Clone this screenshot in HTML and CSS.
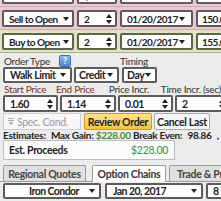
FILE: index.html
```html
<!DOCTYPE html>
<html>
<head>
<meta charset="utf-8">
<link rel="stylesheet" href="styles.css">
</head>
<body>
<div class="page">
  <div class="legs">
    <div class="leg sell">
      <div class="box action"><span class="caret"></span></div>
      <div class="box qty"><svg class="spin" width="6" height="10" viewBox="0 0 6 10"><path d="M0 4 L3 0 L6 4Z M0 6 L3 10 L6 6Z" fill="#222"/></svg></div>
      <div class="box date"><span class="caret"></span></div>
      <div class="box strike"></div>
    </div>
    <div class="leg sell">
      <div class="box action"><span class="txt">Sell to Open</span><span class="caret"></span></div>
      <div class="box qty"><span class="txt">2</span><svg class="spin" width="6" height="10" viewBox="0 0 6 10"><path d="M0 4 L3 0 L6 4Z M0 6 L3 10 L6 6Z" fill="#222"/></svg></div>
      <div class="box date"><span class="txt">01/20/2017</span><span class="caret"></span></div>
      <div class="box strike"><span class="txt">150.0</span></div>
    </div>
    <div class="leg buy">
      <div class="box action"><span class="txt">Buy to Open</span><span class="caret"></span></div>
      <div class="box qty"><span class="txt">2</span><svg class="spin" width="6" height="10" viewBox="0 0 6 10"><path d="M0 4 L3 0 L6 4Z M0 6 L3 10 L6 6Z" fill="#222"/></svg></div>
      <div class="box date"><span class="txt">01/20/2017</span><span class="caret"></span></div>
      <div class="box strike"><span class="txt">155.0</span></div>
    </div>
  </div>

  <div class="order">
    <div class="lbl-row top">
      <div class="lbl w-ordertype">Order Type <span class="help">?</span></div>
      <div class="lbl">Timing</div>
    </div>
    <div class="sel-row">
      <div class="sel walk"><span class="txt">Walk Limit</span><span class="caret"></span></div>
      <div class="sel credit"><span class="txt">Credit</span><span class="caret"></span></div>
      <div class="sel day"><span class="txt">Day</span><span class="caret"></span></div>
    </div>
    <div class="lbl-row prices">
      <div class="lbl req c1">Start Price</div>
      <div class="lbl req c2">End Price</div>
      <div class="lbl c3">Price Incr.</div>
      <div class="lbl c4">Time Incr. (sec)</div>
    </div>
    <div class="spin-row">
      <div class="sel num"><span class="txt">1.60</span><svg class="spin" width="6" height="10" viewBox="0 0 6 10"><path d="M0 4 L3 0 L6 4Z M0 6 L3 10 L6 6Z" fill="#222"/></svg></div>
      <div class="sel num wide"><span class="txt">1.14</span><svg class="spin" width="6" height="10" viewBox="0 0 6 10"><path d="M0 4 L3 0 L6 4Z M0 6 L3 10 L6 6Z" fill="#222"/></svg></div>
      <div class="sel num"><span class="txt">0.01</span><svg class="spin" width="6" height="10" viewBox="0 0 6 10"><path d="M0 4 L3 0 L6 4Z M0 6 L3 10 L6 6Z" fill="#222"/></svg></div>
      <div class="sel num"><span class="txt">2</span><svg class="spin" width="6" height="10" viewBox="0 0 6 10"><path d="M0 4 L3 0 L6 4Z M0 6 L3 10 L6 6Z" fill="#222"/></svg></div>
    </div>
    <div class="btn-row">
      <div class="spec"><svg class="filter" width="6" height="8" viewBox="0 0 6 8"><path d="M0 0.5 H6 M0 2.5 H6" stroke="#aaa" stroke-width="1"/><path d="M1 4 L3 7.5 L5 4Z" fill="#aaa"/></svg><span>Spec. Cond.</span></div>
      <div class="btn review">Review Order</div>
      <div class="btn cancel">Cancel Last</div>
    </div>
    <div class="estimates">
      <b>Estimates:</b> <b class="sp">Max Gain:</b> <span class="green">$228.00</span> <b>Break Even:</b> <b class="sp">98.86</b> <b class="sp">,</b>
    </div>
    <div class="proceeds">
      <span class="p-lbl">Est. Proceeds</span><span class="p-val">$228.00</span>
    </div>
    <div class="tabs">
      <div class="tab t1">Regional Quotes</div>
      <div class="tab t2 active">Option Chains</div>
      <div class="tab t3">Trade &amp; Probability</div>
    </div>
    <div class="bottom-row">
      <div class="sel strat"><span class="txt">Iron Condor</span><span class="caret"></span></div>
      <div class="sel exp"><span class="txt">Jan 20, 2017</span><span class="caret"></span></div>
      <div class="sel strikes"><span class="txt">8 Strikes</span></div>
    </div>
  </div>
</div>
</body>
</html>
```

FILE: styles.css
```css
html, body {
  margin: 0;
  padding: 0;
}
body {
  background: #ececec;
  font-family: Lato, "Open Sans", "DejaVu Sans", sans-serif;
  font-size: 10.5px;
  letter-spacing: -0.3px;
  color: #222;
}
.page {
  width: 221px;
  height: 201px;
  overflow: hidden;
}

/* ---------- legs ---------- */
.legs {
  margin-top: -16px;
}
.leg {
  display: flex;
  gap: 3px;
  padding: 3px 0 2px 2px;
  border-bottom: 1px solid;
  white-space: nowrap;
}
.leg.sell {
  background: #e8cad2;
  border-color: #d3a6b1;
}
.leg.buy {
  background: #dfe4c6;
  border-color: #a8b47e;
}
.box {
  box-sizing: border-box;
  height: 17px;
  flex: none;
  display: flex;
  align-items: center;
  justify-content: space-between;
  padding: 0 3px 0 5px;
  background: #fff;
  border: 2px solid #625858;
  border-radius: 2px;
  font-size: 10px;
  letter-spacing: -0.5px;
  font-weight: 700;
  overflow: hidden;
}
.buy .box {
  border-color: #5f6349;
}
.box.action { width: 72px; }
.box.qty { width: 40px; }
.box.date { width: 73px; padding-left: 5px; padding-right: 6px; }
.box.strike { width: 40px; justify-content: flex-start; padding-left: 4px; }

.caret {
  flex: none;
  width: 0;
  height: 0;
  border-left: 3px solid transparent;
  border-right: 3px solid transparent;
  border-top: 4px solid #222;
}
.spin {
  flex: none;
  display: block;
}

/* ---------- order section ---------- */
.order {
  padding: 0 0 0 3px;
}
.lbl-row {
  display: flex;
  align-items: flex-end;
  white-space: nowrap;
  color: #333;
  font-size: 10px;
}
.lbl-row.top {
  height: 14px;
}
.lbl-row.top .lbl {
  line-height: 12px;
}
.w-ordertype {
  width: 116px;
  padding-left: 1px;
  display: flex;
  align-items: center;
}
.help {
  display: inline-block;
  width: 10px;
  height: 10px;
  margin-left: 9px;
  background: linear-gradient(#8fb6e8, #4d84cf);
  border: 1px solid #3f6fb0;
  border-radius: 2px;
  color: #fff;
  font-weight: 700;
  font-size: 9px;
  line-height: 10px;
  text-align: center;
  letter-spacing: 0;
}

.sel-row {
  display: flex;
  gap: 2px;
  height: 16px;
}
.sel {
  box-sizing: border-box;
  height: 16px;
  flex: none;
  display: flex;
  align-items: center;
  justify-content: space-between;
  padding: 0 4px 0 5px;
  background: #fff;
  border: 2px solid #5c5c5c;
  border-radius: 2px;
  font-size: 10.5px;
  letter-spacing: -0.45px;
  font-weight: 700;
  white-space: nowrap;
  overflow: hidden;
}
.sel.walk { width: 69px; }
.sel.credit { width: 45px; padding-left: 3px; }
.sel.day { width: 35px; margin-left: 1px; padding-left: 3px; }

.lbl-row.prices {
  height: 12px;
}
.lbl-row.prices .lbl {
  line-height: 11px;
  padding-left: 1px;
}
.lbl.req { color: #7a3326; }
.c1 { width: 56px; }
.c2 { width: 57px; }
.c3 { width: 56px; }

.spin-row {
  display: flex;
  gap: 2px;
  height: 17px;
}
.sel.num {
  width: 55px;
  height: 17px;
  padding-right: 3px;
}
.sel.num.wide { width: 56px; }

.btn-row {
  display: flex;
  gap: 2px;
  margin-top: 1px;
  height: 17px;
}
.spec {
  box-sizing: border-box;
  width: 78px;
  height: 17px;
  display: flex;
  align-items: center;
  gap: 3px;
  padding-left: 4px;
  background: #f7f7f7;
  border: 1px solid #cfcfcf;
  color: #9a9a9a;
  white-space: nowrap;
}
.filter { display: block; }
.btn {
  box-sizing: border-box;
  height: 17px;
  display: flex;
  align-items: center;
  justify-content: center;
  font-weight: 700;
  border-radius: 2px;
  white-space: nowrap;
}
.btn.review {
  width: 68px;
  margin-left: 1px;
  background: linear-gradient(#fbe38a, #efc445);
  border: 1px solid #c79a2a;
}
.btn.cancel {
  width: 56px;
  background: #f6f6f6;
  border: 1px solid #a9a9a9;
}

.estimates {
  height: 10px;
  line-height: 10px;
  font-size: 10px;
  white-space: nowrap;
  overflow: hidden;
}
.estimates b { font-weight: 700; }
.estimates .sp { margin-left: 3px; }
.green { color: #3f8f3a; font-weight: 700; }

.proceeds {
  box-sizing: border-box;
  width: 172px;
  height: 20px;
  display: flex;
  align-items: center;
  justify-content: space-between;
  padding: 0 6px 0 5px;
  background: #fbfbfb;
  border: 1px solid #bdbdbd;
}
.p-lbl { font-weight: 700; }
.p-val { color: #3f8f3a; }

.tabs {
  display: flex;
  align-items: flex-end;
  margin-top: 3px;
  height: 18px;
  border-bottom: 1px solid #9a9a9a;
  margin-left: -3px;
  padding-left: 3px;
}
.tab {
  box-sizing: border-box;
  height: 16px;
  display: flex;
  align-items: center;
  justify-content: center;
  border: 1px solid #9a9a9a;
  border-bottom: none;
  border-radius: 2px 2px 0 0;
  background: #e0e0e0;
  font-weight: 700;
  color: #444;
  white-space: nowrap;
  overflow: hidden;
  flex: none;
}
.tab.t1 { width: 83px; }
.tab.t2 {
  width: 74px;
  margin-left: 6px;
  height: 17px;
  background: #fff;
  margin-bottom: -1px;
  color: #333;
}
.tab.t3 {
  width: 70px;
  margin-left: 3px;
  justify-content: flex-start;
  padding-left: 7px;
}

.bottom-row {
  display: flex;
  margin-top: 1px;
  height: 16px;
}
.sel.strat {
  width: 98px;
  padding-left: 24px;
  letter-spacing: -0.55px;
}
.sel.exp {
  width: 98px;
  margin-left: 4px;
  padding-left: 6px;
  letter-spacing: -0.55px;
}
.sel.strikes {
  width: 40px;
  margin-left: 3px;
  justify-content: flex-start;
}
```
